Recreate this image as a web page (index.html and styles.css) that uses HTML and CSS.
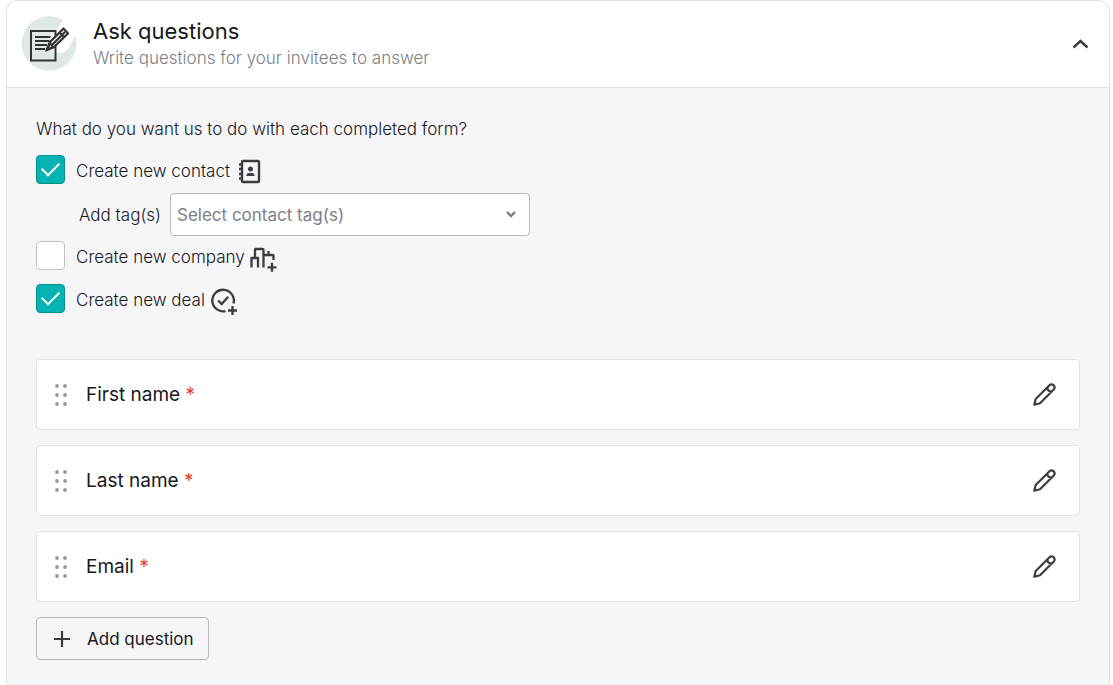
FILE: index.html
```html
<!DOCTYPE html>
<html lang="en">
<head>
<meta charset="utf-8">
<meta name="viewport" content="width=device-width, initial-scale=1">
<title>Ask questions</title>
<link rel="stylesheet" href="styles.css">
</head>
<body>
<main class="panel">
  <header class="panel-header">
    <svg class="panel-icon" viewBox="0 0 56 56" fill="none" aria-hidden="true">
      <path d="M42 4A27.300 27.300 0 1 0 54.300 20C51 24 49 36 39 37C31 37.500 26 30 30 22C33 16 37 12 42 4Z" fill="#dfe7e9"/>
      <path d="M10 15H34.500V44.500H10Z" stroke="#333" stroke-width="2"/>
      <path d="M14 21H29.500M14 25H28.500M14 29H26M14 33H24" stroke="#333" stroke-width="1.900"/>
      <path d="M25.500 34L29 26L42.500 12.500L47 17.500L32.500 31.500Z" fill="#dfe7e9" stroke="#333" stroke-width="2.200" stroke-linejoin="round"/>
      <path d="M38.500 16.500L43 21M31 29L44 16M26 34L29 27L32 31Z" stroke="#333" stroke-width="2"/>
    </svg>
    <div class="panel-heading">
      <h1 class="panel-title">Ask questions</h1>
      <p class="panel-subtitle">Write questions for your invitees to answer</p>
    </div>
    <button class="icon-button" type="button" aria-label="Collapse section">
      <svg width="24" height="24" viewBox="0 0 24 24" fill="none" stroke="#3c3d42" stroke-width="2.400" aria-hidden="true"><path d="M5.500 15.500L12.500 9L19.500 15.500"/></svg>
    </button>
  </header>

  <section class="panel-body">
    <fieldset class="actions">
      <legend class="actions-title">What do you want us to do with each completed form?</legend>

      <div class="check-row">
        <input class="check" type="checkbox" id="contact" checked>
        <label for="contact">Create new contact</label>
        <svg class="row-icon" viewBox="0 0 26 26" fill="none" stroke="#3c3d42" stroke-width="2.400" aria-hidden="true">
          <rect x="6" y="2" width="17" height="21" rx="1"/>
          <path d="M3 5.500H6M3 10H6M3 15H6M3 19.500H6"/>
          <circle cx="14.500" cy="10" r="2.500" fill="#3c3d42" stroke="none"/>
          <path d="M10.500 17V16C10.500 13 18.500 13 18.500 16V17Z" fill="#3c3d42" stroke="none"/>
        </svg>
      </div>

      <div class="tag-row">
        <label for="tags">Add tag(s)</label>
        <div class="select-wrap">
          <select class="select" id="tags"><option>Select contact tag(s)</option></select>
          <svg class="select-arrow" width="12" height="12" viewBox="0 0 12 12" fill="none" stroke="#7d7e87" stroke-width="2.400" aria-hidden="true"><path d="M2 4L6 8L10 4"/></svg>
        </div>
      </div>

      <div class="check-row">
        <input class="check" type="checkbox" id="company">
        <label for="company">Create new company</label>
        <svg class="row-icon" viewBox="0 0 26 26" fill="none" stroke="#3c3d42" stroke-width="2.300" stroke-linejoin="round" aria-hidden="true">
          <path d="M.5 22.500V13H7V22.500M4 13V4.500Q4 4 4.500 4H11.500Q12.500 4 12.500 5V22.500M12.500 10H21.500Q22.500 10 22.500 11V15M17.500 10V6"/>
          <path d="M21 17.800V26.800M16.500 22.300H25.500"/>
        </svg>
      </div>

      <div class="check-row check-row-spaced">
        <input class="check" type="checkbox" id="deal" checked>
        <label for="deal">Create new deal</label>
        <svg class="row-icon" viewBox="0 0 26 26" fill="none" stroke="#3c3d42" stroke-width="2.300" aria-hidden="true">
          <path d="M22.500 15.500A10.800 10.800 0 1 0 14.500 23.100"/>
          <path d="M7.200 12.500L10.700 16L17.200 8.800"/>
          <path d="M21.500 18V27M17 22.500H26"/>
        </svg>
      </div>
    </fieldset>

    <ul class="questions">
      <li class="question">
        <svg class="grip" viewBox="0 0 14 22" fill="#96979f" aria-hidden="true"><circle cx="3" cy="2" r="1.900"/><circle cx="11" cy="2" r="1.900"/><circle cx="3" cy="11" r="1.900"/><circle cx="11" cy="11" r="1.900"/><circle cx="3" cy="20" r="1.900"/><circle cx="11" cy="20" r="1.900"/></svg>
        <span class="question-name">First name <span class="required">*</span></span>
        <button class="icon-button" type="button" aria-label="Edit First name">
          <svg width="24" height="24" viewBox="0 0 24 24" fill="none" stroke="#3c3d42" stroke-width="2.200" stroke-linejoin="round" aria-hidden="true"><path d="M2.300 21.700L3.700 16L17.500 2.200Q19.500 .5 21.700 2.300Q23.500 4.500 21.800 6.500L8 20.300ZM15.300 4.500Q15.500 8.300 19.500 8.700"/></svg>
        </button>
      </li>
      <li class="question">
        <svg class="grip" viewBox="0 0 14 22" fill="#96979f" aria-hidden="true"><circle cx="3" cy="2" r="1.900"/><circle cx="11" cy="2" r="1.900"/><circle cx="3" cy="11" r="1.900"/><circle cx="11" cy="11" r="1.900"/><circle cx="3" cy="20" r="1.900"/><circle cx="11" cy="20" r="1.900"/></svg>
        <span class="question-name">Last name <span class="required">*</span></span>
        <button class="icon-button" type="button" aria-label="Edit Last name">
          <svg width="24" height="24" viewBox="0 0 24 24" fill="none" stroke="#3c3d42" stroke-width="2.200" stroke-linejoin="round" aria-hidden="true"><path d="M2.300 21.700L3.700 16L17.500 2.200Q19.500 .5 21.700 2.300Q23.500 4.500 21.800 6.500L8 20.300ZM15.300 4.500Q15.500 8.300 19.500 8.700"/></svg>
        </button>
      </li>
      <li class="question">
        <svg class="grip" viewBox="0 0 14 22" fill="#96979f" aria-hidden="true"><circle cx="3" cy="2" r="1.900"/><circle cx="11" cy="2" r="1.900"/><circle cx="3" cy="11" r="1.900"/><circle cx="11" cy="11" r="1.900"/><circle cx="3" cy="20" r="1.900"/><circle cx="11" cy="20" r="1.900"/></svg>
        <span class="question-name">Email <span class="required">*</span></span>
        <button class="icon-button" type="button" aria-label="Edit Email">
          <svg width="24" height="24" viewBox="0 0 24 24" fill="none" stroke="#3c3d42" stroke-width="2.200" stroke-linejoin="round" aria-hidden="true"><path d="M2.300 21.700L3.700 16L17.500 2.200Q19.500 .5 21.700 2.300Q23.500 4.500 21.800 6.500L8 20.300ZM15.300 4.500Q15.500 8.300 19.500 8.700"/></svg>
        </button>
      </li>
    </ul>

    <button class="add-button" type="button">
      <svg width="18" height="18" viewBox="0 0 18 18" fill="none" stroke="#3c3d42" stroke-width="2.200" aria-hidden="true"><path d="M9 1V17M1 9H17"/></svg>
      Add question
    </button>
  </section>
</main>
</body>
</html>
```
FILE: styles.css
```css
* {
  box-sizing: border-box;
}

body {
  margin: 0;
  background: #fff;
  color: #17181c;
  font: 300 17px/24px Inter, "Liberation Sans", sans-serif;
}

.panel {
  display: flex;
  flex-direction: column;
  min-height: 100vh;
  margin: 0 3px 0 6px;
  border: 1px solid #e1e2e5;
  border-bottom: 0;
  border-radius: 12px 12px 0 0;
  overflow: hidden;
}

.panel-header {
  display: flex;
  align-items: center;
  padding: 15px 14px;
  border-bottom: 1px solid #e1e2e5;
}

.panel-icon {
  flex: none;
  width: 56px;
  height: 56px;
}

.panel-heading {
  flex: 1;
  padding-left: 16px;
}

.panel-title {
  margin: 0;
  font-size: 22px;
  font-weight: 400;
  line-height: 28px;
}

.panel-subtitle {
  margin: 0;
  color: #7d7e87;
  line-height: 26px;
}

.icon-button {
  display: flex;
  padding: 3px;
  border: 0;
  background: none;
  cursor: pointer;
}

.panel-body {
  flex: 1;
  padding: 29px;
  background: #f6f6f9;
}

.actions {
  margin: 0;
  padding: 0;
  border: 0;
}

.actions-title {
  margin-bottom: 14px;
  padding: 0;
}

.check-row {
  display: flex;
  align-items: center;
  height: 29px;
}

.check-row label {
  padding: 2px 6px 0 11px;
}

.check-row-spaced {
  margin-top: 14px;
}

.check {
  flex: none;
  width: 29px;
  height: 29px;
  margin: 0;
  appearance: none;
  border: 1px solid #c0c1c7;
  border-radius: 4px;
  background: #fff;
}

.check:checked {
  display: grid;
  place-items: center;
  border-color: #08908f;
  background: #04b3b2;
}

.check:checked::before {
  content: "";
  width: 15px;
  height: 8px;
  margin-bottom: 5px;
  border: solid #fff;
  border-width: 0 0 2px 2px;
  transform: rotate(-45deg);
}

.row-icon {
  flex: none;
  width: 26px;
  height: 26px;
  margin-top: 4px;
  overflow: visible;
}

.tag-row {
  display: flex;
  align-items: center;
  gap: 9px;
  margin: 9px 0 5px;
  padding-left: 43px;
}

.select-wrap {
  position: relative;
  flex: 0 1 360px;
}

.select {
  width: 100%;
  height: 43px;
  padding: 0 32px 0 6px;
  appearance: none;
  border: 1px solid #b9babf;
  border-radius: 4px;
  background: #fff;
  color: #7d7e87;
  font: inherit;
  font-weight: 400;
}

.select-arrow {
  position: absolute;
  top: 15px;
  right: 13px;
  pointer-events: none;
}

.questions {
  display: grid;
  gap: 15px;
  margin: 46px 0 15px;
  padding: 0;
  list-style: none;
}

.question {
  display: flex;
  align-items: center;
  min-height: 71px;
  padding: 10px 20px;
  border: 1px solid #e1e2e5;
  border-radius: 4px;
  background: #fff;
}

.grip {
  flex: none;
  width: 14px;
  height: 22px;
  margin: 0 18px 0 -3px;
}

.question-name {
  flex: 1;
  font-size: 19px;
  font-weight: 400;
}

.required {
  color: #e0402c;
}

.add-button {
  display: flex;
  align-items: center;
  gap: 16px;
  height: 43px;
  padding: 0 14px 0 16px;
  border: 1px solid #b9babf;
  border-radius: 4px;
  background: none;
  color: inherit;
  font: inherit;
  font-weight: 400;
  cursor: pointer;
}
```
